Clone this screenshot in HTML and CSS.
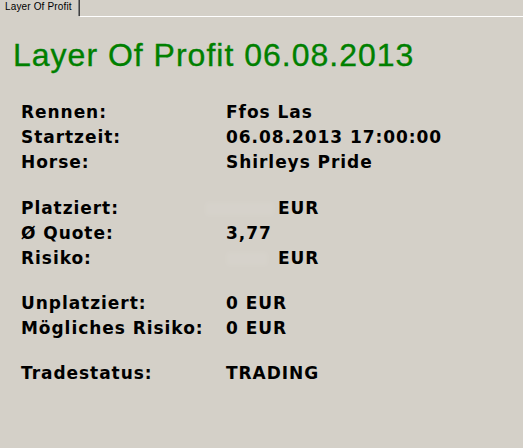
FILE: index.html
```html
<!DOCTYPE html>
<html>
<head>
<meta charset="utf-8">
<link rel="stylesheet" href="styles.css">
</head>
<body>
<div class="tabbar">
  <div class="tab">Layer Of Profit</div>
  <div class="tabrest"></div>
</div>
<div class="content">
  <h1 class="title">Layer Of Profit 06.08.2013</h1>
  <div class="group first">
    <div class="label">Rennen:</div><div class="value">Ffos Las</div>
    <div class="label">Startzeit:</div><div class="value">06.08.2013 17:00:00</div>
    <div class="label">Horse:</div><div class="value">Shirleys Pride</div>
  </div>
  <div class="group">
    <div class="label">Platziert:</div><div class="value"><span class="blur blur-a"></span>EUR</div>
    <div class="label">Ø Quote:</div><div class="value">3,77</div>
    <div class="label">Risiko:</div><div class="value"><span class="blur blur-b"></span>EUR</div>
  </div>
  <div class="group">
    <div class="label">Unplatziert:</div><div class="value">0 EUR</div>
    <div class="label">Mögliches Risiko:</div><div class="value">0 EUR</div>
  </div>
  <div class="group">
    <div class="label">Tradestatus:</div><div class="value">TRADING</div>
  </div>
</div>
</body>
</html>
```
FILE: styles.css
```css
html, body {
  margin: 0;
  padding: 0;
  background: #d4d0c8;
  width: 523px;
  height: 448px;
  overflow: hidden;
}

.tabbar {
  display: flex;
  height: 17px;
}

.tab {
  box-sizing: border-box;
  width: 80px;
  height: 16px;
  padding-left: 5px;
  border-right: 1px solid #404040;
  box-shadow: inset -1px 0 #808080;
  font-family: "Liberation Sans", Arial, sans-serif;
  font-size: 10px;
  letter-spacing: 0.15px;
  line-height: 13px;
  color: #000;
  white-space: nowrap;
}

.tabrest {
  flex: 1;
  height: 16px;
  border-bottom: 1px solid #ffffff;
}

.content {
  padding-left: 13px;
}

.title {
  margin: 20px 0 27px 0;
  font-family: "Liberation Sans", Arial, sans-serif;
  font-weight: normal;
  font-size: 32px;
  letter-spacing: 1px;
  line-height: 36px;
  color: #008000;
  -webkit-text-stroke: 0.35px #008000;
  white-space: nowrap;
}

.group {
  display: grid;
  grid-template-columns: 205px auto;
  grid-auto-rows: 25px;
  padding-left: 8px;
  margin-bottom: 20px;
  font-family: "DejaVu Sans", Verdana, sans-serif;
  font-weight: bold;
  font-size: 17px;
  letter-spacing: 0.95px;
  line-height: 25px;
  color: #000;
  white-space: nowrap;
}

.group.first {
  margin-bottom: 21px;
}

.blur {
  display: inline-block;
  height: 14px;
  vertical-align: -2px;
  background: rgba(255, 255, 255, 0.06);
  filter: blur(2px);
}

.blur-a {
  width: 69px;
  margin-left: -21px;
  margin-right: 4px;
}

.blur-b {
  width: 42px;
  margin-right: 10px;
}
```
